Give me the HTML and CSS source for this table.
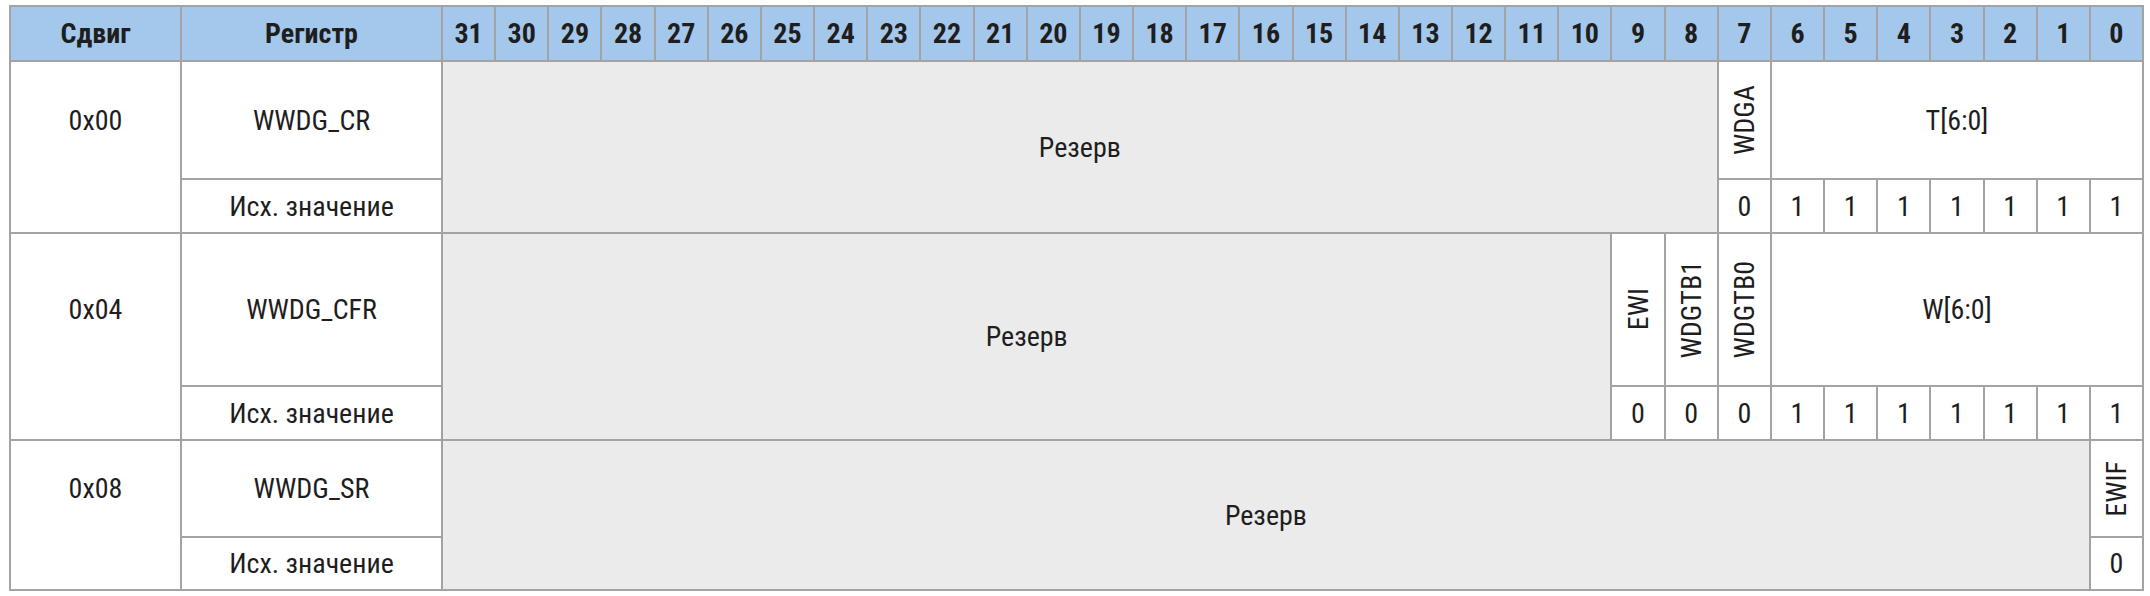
FILE: index.html
```html
<!DOCTYPE html>
<html lang="ru">
<head>
<meta charset="utf-8">
<title>WWDG registers</title>
<link rel="stylesheet" href="styles.css">
</head>
<body>
<div class="regmap">
  <div class="c hd">Сдвиг</div>
  <div class="c hd">Регистр</div>
  <div class="c hd">31</div><div class="c hd">30</div><div class="c hd">29</div><div class="c hd">28</div>
  <div class="c hd">27</div><div class="c hd">26</div><div class="c hd">25</div><div class="c hd">24</div>
  <div class="c hd">23</div><div class="c hd">22</div><div class="c hd">21</div><div class="c hd">20</div>
  <div class="c hd">19</div><div class="c hd">18</div><div class="c hd">17</div><div class="c hd">16</div>
  <div class="c hd">15</div><div class="c hd">14</div><div class="c hd">13</div><div class="c hd">12</div>
  <div class="c hd">11</div><div class="c hd">10</div><div class="c hd">9</div><div class="c hd">8</div>
  <div class="c hd">7</div><div class="c hd">6</div><div class="c hd">5</div><div class="c hd">4</div>
  <div class="c hd">3</div><div class="c hd">2</div><div class="c hd">1</div><div class="c hd">0</div>

  <!-- 0x00 -->
  <div class="off rows2"><span class="off-label">0x00</span></div>
  <div class="c">WWDG_CR</div>
  <div class="c res rows2 cols24">Резерв</div>
  <div class="c"><span class="vert">WDGA</span></div>
  <div class="c cols7">T[6:0]</div>
  <div class="c">Исх. значение</div>
  <div class="c">0</div>
  <div class="c">1</div><div class="c">1</div><div class="c">1</div><div class="c">1</div>
  <div class="c">1</div><div class="c">1</div><div class="c">1</div>

  <!-- 0x04 -->
  <div class="off rows2"><span class="off-label">0x04</span></div>
  <div class="c">WWDG_CFR</div>
  <div class="c res rows2 cols22">Резерв</div>
  <div class="c"><span class="vert">EWI</span></div>
  <div class="c"><span class="vert">WDGTB1</span></div>
  <div class="c"><span class="vert">WDGTB0</span></div>
  <div class="c cols7">W[6:0]</div>
  <div class="c">Исх. значение</div>
  <div class="c">0</div><div class="c">0</div><div class="c">0</div>
  <div class="c">1</div><div class="c">1</div><div class="c">1</div><div class="c">1</div>
  <div class="c">1</div><div class="c">1</div><div class="c">1</div>

  <!-- 0x08 -->
  <div class="off rows2"><span class="off-label">0x08</span></div>
  <div class="c">WWDG_SR</div>
  <div class="c res rows2 cols31">Резерв</div>
  <div class="c"><span class="vert">EWIF</span></div>
  <div class="c">Исх. значение</div>
  <div class="c">0</div>
</div>
</body>
</html>
```
FILE: styles.css
```css
html, body {
  margin: 0;
  padding: 0;
  background: #ffffff;
}

.regmap {
  box-sizing: border-box;
  width: 2135px;
  margin: 5px 0 0 9px;
  padding: 2px;
  gap: 2px;
  background: #a3a3a3;
  display: grid;
  grid-template-columns: 169px 259px repeat(32, 1fr);
  grid-template-rows: 53px 116px 52px 151px 52px 95px 51px;
  font-family: "Roboto Condensed", "DejaVu Sans", sans-serif;
  font-stretch: condensed;
  font-size: 28px;
  color: #1e1e1e;
}

.c {
  background: #ffffff;
  display: flex;
  align-items: center;
  justify-content: center;
  white-space: nowrap;
  overflow: hidden;
}

.off {
  background: #ffffff;
  display: grid;
  grid-template-rows: subgrid;
}

.off-label {
  display: flex;
  align-items: center;
  justify-content: center;
}

.hd {
  background: #a4c8ec;
  font-weight: bold;
}

.res {
  background: #ebebeb;
}

.rows2 { grid-row: span 2; }
.cols7 { grid-column: span 7; }
.cols22 { grid-column: span 22; }
.cols24 { grid-column: span 24; }
.cols31 { grid-column: span 31; }

.vert {
  writing-mode: vertical-rl;
  transform: rotate(180deg);
}
```
